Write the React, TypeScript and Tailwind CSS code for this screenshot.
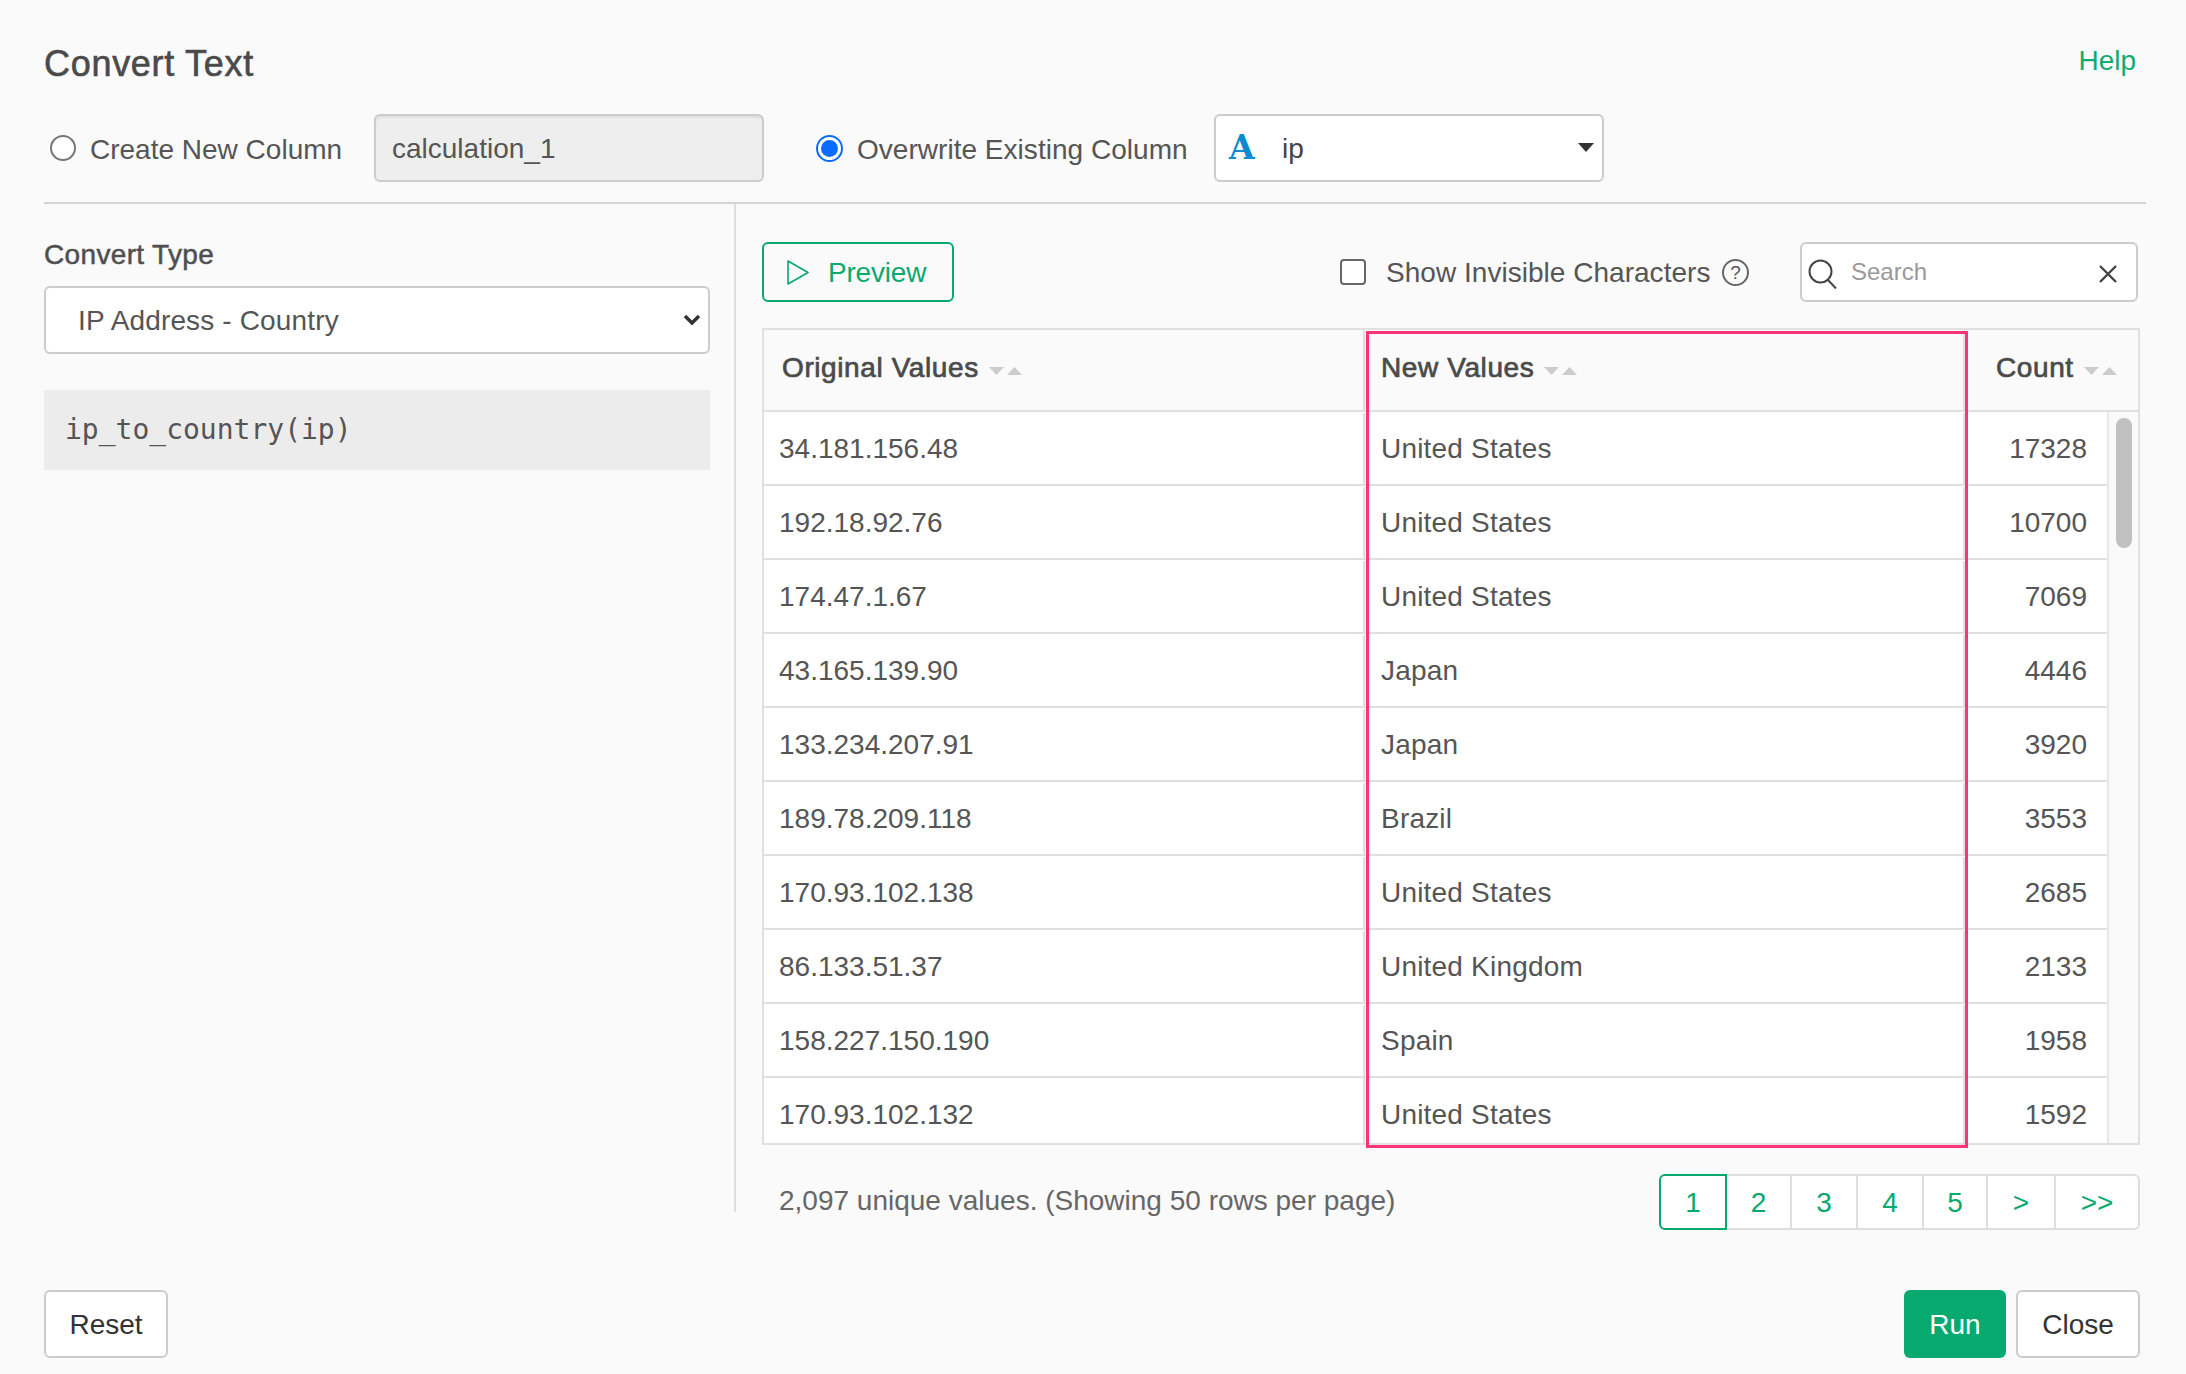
const rows: [string, string, string][] = [
  ["34.181.156.48", "United States", "17328"],
  ["192.18.92.76", "United States", "10700"],
  ["174.47.1.67", "United States", "7069"],
  ["43.165.139.90", "Japan", "4446"],
  ["133.234.207.91", "Japan", "3920"],
  ["189.78.209.118", "Brazil", "3553"],
  ["170.93.102.138", "United States", "2685"],
  ["86.133.51.37", "United Kingdom", "2133"],
  ["158.227.150.190", "Spain", "1958"],
  ["170.93.102.132", "United States", "1592"],
];

function SortIcons() {
  return (
    <svg width="33" height="8" viewBox="0 0 33 8" className="ml-[10px] mt-[6px] shrink-0">
      <polygon points="0,0 15,0 7.5,8" fill="#cccccc" />
      <polygon points="18,8 33,8 25.5,0" fill="#cccccc" />
    </svg>
  );
}

function Pager({ label, width, active }: { label: string; width: string; active?: boolean }) {
  return (
    <div
      className={
        active
          ? "w-[68px] h-[56px] flex items-center justify-center pt-[1px] border-2 border-[#08a96d] rounded-l-[6px] bg-white"
          : `${width} h-[56px] flex items-center justify-center pt-[1px] border-y-2 border-r-2 border-[#dedede] bg-white last:rounded-r-[6px]`
      }
    >
      {label}
    </div>
  );
}

export default function App() {
  return (
    <div className="w-[2186px] h-[1374px] bg-[#fafafa] pl-[44px] pr-[46px] text-[28px] text-[#555555] font-['Liberation_Sans',Arial,sans-serif] flex flex-col overflow-hidden">
      <div className="flex justify-between h-[114px] pr-[4px]">
        <h1 className="text-[36px] leading-[42px] mt-[43px] text-[#4a4a4a] [-webkit-text-stroke:0.6px_#4a4a4a] tracking-[0.7px]">Convert Text</h1>
        <a className="text-[#10ab6e] leading-[32px] mt-[45px]">Help</a>
      </div>

      <div className="flex items-center h-[68px]">
        <span className="w-[26px] h-[26px] ml-[6px] rounded-full border-2 border-[#777777] bg-white shrink-0" />
        <span className="ml-[14px] w-[284px] pt-[3px]">Create New Column</span>
        <div className="w-[390px] h-[68px] flex items-center pl-[16px] pt-[1px] bg-[#eeeeee] border-2 border-[#cccccc] rounded-[6px] shadow-[inset_0_2px_2px_rgba(0,0,0,0.06)]">calculation_1</div>
        <span className="w-[27px] h-[27px] ml-[52px] rounded-full border-2 border-[#0a6cff] bg-white flex items-center justify-center shrink-0">
          <span className="w-[17px] h-[17px] rounded-full bg-[#0a6cff]" />
        </span>
        <span className="ml-[14px] w-[357px] pt-[3px] tracking-[0.03px]">Overwrite Existing Column</span>
        <div className="w-[390px] h-[68px] relative flex items-center bg-white border-2 border-[#cccccc] rounded-[6px] text-[#444444]">
          <span className="ml-[13px] w-[53px] font-['DejaVu_Serif',serif] font-bold text-[33px] leading-[34px] text-[#0a8ad0]">A</span>
          <span className="pt-[1px]">ip</span>
          <svg width="16" height="9" viewBox="0 0 16 9" className="absolute right-[8px] top-[27px]">
            <polygon points="0,0 16,0 8,9" fill="#333333" />
          </svg>
        </div>
      </div>

      <div className="mt-[20px] -mr-[6px] border-t-2 border-[#d4d4d4]" />

      <div className="flex h-[1008px]">
        <div className="w-[692px] border-r-2 border-[#dddddd] pr-[25px] shrink-0">
          <div className="mt-[35px] leading-[32px] text-[#4f4f4f] [-webkit-text-stroke:0.5px_#4f4f4f] tracking-[0.35px]">Convert Type</div>
          <div className="mt-[15px] w-[666px] h-[68px] relative flex items-center pl-[32px] pt-[1px] bg-white border-2 border-[#cccccc] rounded-[6px] tracking-[0.15px]">
            IP Address - Country
            <svg width="18" height="12" viewBox="0 0 18 12" className="absolute right-[7px] top-[26px]">
              <path d="M2 2 L9 9 L16 2" fill="none" stroke="#333333" strokeWidth="3.5" />
            </svg>
          </div>
          <div className="mt-[36px] w-[666px] h-[80px] bg-[#ececec] flex items-center pl-[21px] font-['DejaVu_Sans_Mono',monospace] text-[28px] text-[#555555]">ip_to_country(ip)</div>
        </div>

        <div className="flex-1 pl-[26px] min-w-0">
          <div className="flex items-center h-[60px] mt-[38px]">
            <div className="w-[192px] h-[60px] flex items-center border-2 border-[#08a96d] rounded-[6px] text-[#08a96d]">
              <svg width="22" height="25" viewBox="0 0 22 25" className="ml-[23px]">
                <polygon points="1,1 21,12.5 1,24" fill="none" stroke="#08a96d" strokeWidth="1.6" strokeLinejoin="round" />
              </svg>
              <span className="ml-[19px] pt-[1px] tracking-[-0.2px]">Preview</span>
            </div>
            <span className="ml-[386px] w-[26px] h-[26px] rounded-[4px] border-2 border-[#666666] bg-white shrink-0" />
            <span className="ml-[20px] w-[336px] pt-[2px] tracking-[0.03px]">Show Invisible Characters</span>
            <span className="w-[27px] h-[27px] rounded-full border-2 border-[#666666] flex items-center justify-center text-[19px] leading-none">?</span>
            <div className="ml-[51px] w-[338px] h-[60px] relative flex items-center bg-white border-2 border-[#cccccc] rounded-[6px]">
              <svg width="30" height="30" viewBox="0 0 30 30" className="absolute left-[6px] top-[15px]" fill="none" stroke="#444444" strokeWidth="2">
                <circle cx="12.5" cy="12.5" r="11" />
                <path d="M20 21 L28 29.5" />
              </svg>
              <span className="ml-[49px] text-[24px] text-[#999999] pb-[1px]">Search</span>
              <svg width="20" height="20" viewBox="0 0 20 20" className="absolute right-[18px] top-[20px]" fill="none" stroke="#444444" strokeWidth="2.4">
                <path d="M2 2 L18 18 M18 2 L2 18" />
              </svg>
            </div>
          </div>

          <div className="relative mt-[26px] w-[1378px] h-[817px] border-2 border-[#e0e0e0]">
            <div className="flex h-[82px] border-b-2 border-[#e0e0e0] text-[#4a4a4a] [-webkit-text-stroke:0.7px_#4a4a4a] tracking-[0.6px]">
              <div className="w-[601px] flex items-center pl-[18px] pb-[5px] border-r-2 border-[#e0e0e0]">Original Values<SortIcons /></div>
              <div className="w-[600px] flex items-center pl-[16px] pb-[5px] border-r-2 border-[#e0e0e0]">New Values<SortIcons /></div>
              <div className="flex-1 flex items-center pl-[31px] pb-[5px]">Count<SortIcons /></div>
            </div>
            <div className="flex h-[731px] bg-white">
              <div className="w-[1343px] overflow-hidden">
                {rows.map((r, i) => (
                  <div key={r[0]} className={`flex h-[74px] items-center ${i < rows.length - 1 ? "border-b-2 border-[#e0e0e0] pt-[1px]" : ""}`}>
                    <div className="w-[601px] pl-[15px] h-full flex items-center border-r-2 border-[#e0e0e0]">{r[0]}</div>
                    <div className="w-[600px] pl-[16px] h-full flex items-center border-r-2 border-[#e0e0e0] tracking-[0.2px]">{r[1]}</div>
                    <div className="flex-1 text-right pr-[20px]">{r[2]}</div>
                  </div>
                ))}
              </div>
              <div className="flex-1 bg-[#fafafa] border-l-2 border-[#e8e8e8] pt-[6px] pl-[7px]">
                <div className="w-[16px] h-[130px] rounded-full bg-[#c1c1c1]" />
              </div>
            </div>
            <div className="absolute left-[602px] top-[1px] w-[602px] h-[817px] border-[3px] border-[#ff3377] pointer-events-none" />
          </div>

          <div className="flex items-center justify-between mt-[29px]">
            <span className="ml-[17px] pb-[3px] text-[#666666]">2,097 unique values. (Showing 50 rows per page)</span>
            <div className="flex text-[#08a96d]">
              <Pager label="1" width="w-[68px]" active />
              <Pager label="2" width="w-[65px]" />
              <Pager label="3" width="w-[66px]" />
              <Pager label="4" width="w-[66px]" />
              <Pager label="5" width="w-[64px]" />
              <Pager label=">" width="w-[68px]" />
              <Pager label=">>" width="w-[84px]" />
            </div>
          </div>
        </div>
      </div>

      <div className="flex justify-between mt-[78px]">
        <div className="w-[124px] h-[68px] flex items-center justify-center pt-[2px] bg-white border-2 border-[#cccccc] rounded-[6px] text-[#333333]">Reset</div>
        <div className="flex gap-[10px]">
          <div className="w-[102px] h-[68px] flex items-center justify-center pt-[2px] bg-[#07aa6e] rounded-[6px] text-white">Run</div>
          <div className="w-[124px] h-[68px] flex items-center justify-center pt-[2px] bg-white border-2 border-[#cccccc] rounded-[6px] text-[#333333]">Close</div>
        </div>
      </div>
    </div>
  );
}
